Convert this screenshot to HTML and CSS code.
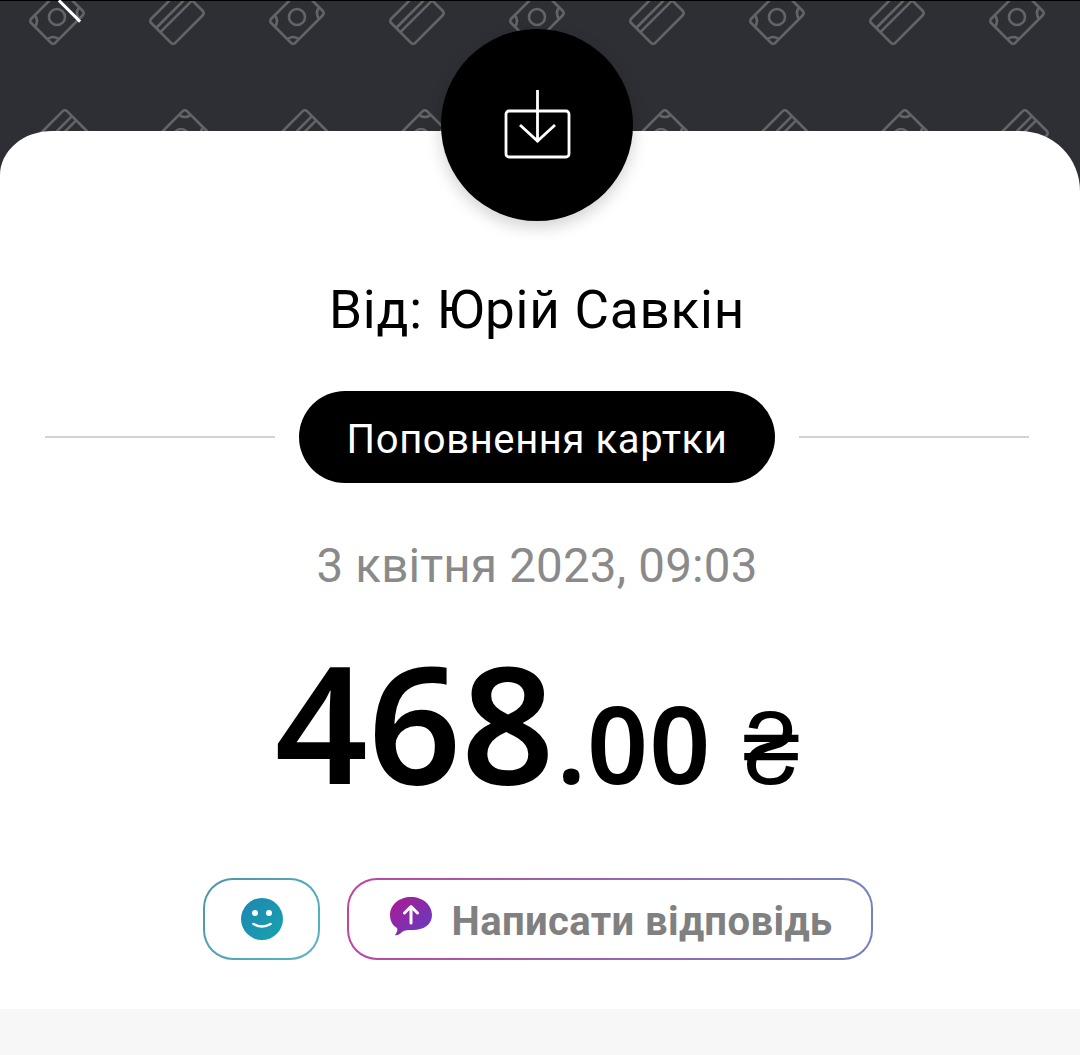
FILE: index.html
```html
<!DOCTYPE html>
<html lang="uk">
<head>
    <meta charset="UTF-8">
    <meta name="viewport" content="width=device-width, initial-scale=1.0">
    <title>Поповнення картки</title>
    <link rel="stylesheet" href="styles.css">
</head>
<body>
    <header class="hero">
        <svg class="hero-pattern" width="1080" height="170" xmlns="http://www.w3.org/2000/svg">
            <defs>
                <g id="money" fill="none" stroke="#636468" stroke-width="2.6" stroke-linejoin="round">
                    <g transform="rotate(-45)">
                        <rect x="-22.500" y="-17" width="45" height="34" rx="3"/>
                        <path d="M-22.500 -9 A8 8 0 0 0 -14.500 -17 M22.500 -9 A8 8 0 0 1 14.500 -17 M-22.500 9 A8 8 0 0 1 -14.500 17 M22.500 9 A8 8 0 0 0 14.500 17"/>
                    </g>
                    <circle cx="0" cy="0" r="8"/>
                </g>
                <g id="card" fill="none" stroke="#636468" stroke-width="2.6" stroke-linejoin="round">
                    <g transform="rotate(-45)">
                        <rect x="-22.500" y="-17" width="45" height="34" rx="3"/>
                        <path d="M-22.500 -7 H22.500 M-22.500 -1 H22.500"/>
                    </g>
                </g>
            </defs>
            <use href="#money" x="57" y="16"/>
            <use href="#card" x="177" y="16"/>
            <use href="#money" x="297" y="16"/>
            <use href="#card" x="417" y="16"/>
            <use href="#money" x="537" y="16"/>
            <use href="#card" x="657" y="16"/>
            <use href="#money" x="777" y="16"/>
            <use href="#card" x="897" y="16"/>
            <use href="#money" x="1017" y="16"/>
            <use href="#card" x="61" y="136"/>
            <use href="#money" x="181" y="136"/>
            <use href="#card" x="301" y="136"/>
            <use href="#money" x="421" y="136"/>
            <use href="#card" x="541" y="136"/>
            <use href="#money" x="661" y="136"/>
            <use href="#card" x="781" y="136"/>
            <use href="#money" x="901" y="136"/>
            <use href="#card" x="1021" y="136"/>
        </svg>
        <span class="hero-tick"></span>
    </header>

    <main class="sheet">
        <div class="badge">
            <svg width="68" height="72" viewBox="0 0 68 72" fill="none" stroke="#fff" stroke-width="2.8" xmlns="http://www.w3.org/2000/svg">
                <rect x="2" y="22" width="63" height="46" rx="3"/>
                <path d="M33.500 1 V53"/>
                <path d="M16 36 L33.500 52 L51 36"/>
            </svg>
        </div>

        <h1 class="sender">Від: Юрій Савкін</h1>

        <div class="type-row">
            <span class="type-line"></span>
            <span class="type-pill">Поповнення картки</span>
            <span class="type-line"></span>
        </div>

        <p class="date">3 квітня 2023, 09:03</p>

        <p class="amount"><span class="amount-int">468</span><span class="amount-frac">.00</span><span class="amount-cur">₴</span></p>

        <div class="actions">
            <button class="btn btn-smile" type="button">
                <svg width="44" height="44" viewBox="0 0 44 44" xmlns="http://www.w3.org/2000/svg">
                    <defs>
                        <linearGradient id="smileFill" x1="0" y1="0" x2="1" y2="1">
                            <stop offset="0" stop-color="#1f86b4"/>
                            <stop offset="1" stop-color="#17a3ad"/>
                        </linearGradient>
                    </defs>
                    <circle cx="22" cy="22" r="21" fill="url(#smileFill)"/>
                    <circle cx="15" cy="16" r="3" fill="#fff"/>
                    <circle cx="29" cy="16" r="3" fill="#fff"/>
                    <path d="M13.500 27 Q22 32 30.500 27" fill="none" stroke="#fff" stroke-width="2.6" stroke-linecap="round"/>
                </svg>
            </button>
            <button class="btn btn-reply" type="button">
                <svg width="44" height="40" viewBox="0 0 44 40" xmlns="http://www.w3.org/2000/svg">
                    <defs>
                        <linearGradient id="replyFill" x1="0" y1="0" x2="1" y2="1">
                            <stop offset="0" stop-color="#ae1a91"/>
                            <stop offset="1" stop-color="#5f3fc4"/>
                        </linearGradient>
                    </defs>
                    <path d="M22 0 C34 0 43 8 43 18 C43 28 34 33 24 33 C19 33 16 33 13 35 C11 37 8 39 6 38 C8 35 9 33 8 31 C3 28 1 23 1 18 C1 8 10 0 22 0 Z" fill="url(#replyFill)"/>
                    <path d="M22 26 V10 M15.500 16 L22 9.500 L28.500 16" fill="none" stroke="#fff" stroke-width="3" stroke-linecap="round" stroke-linejoin="round"/>
                </svg>
                <span class="btn-label">Написати відповідь</span>
            </button>
        </div>
    </main>

    <div class="strip"></div>
</body>
</html>
```

FILE: styles.css
```css
html, body {
    margin: 0;
    padding: 0;
}
body {
    width: 1080px;
    height: 1055px;
    overflow: hidden;
    display: flex;
    flex-direction: column;
    background: #2e2f34;
    font-family: Roboto, "Noto Sans", sans-serif;
}
.hero {
    position: relative;
    height: 131px;
    flex-shrink: 0;
    border-top: 1px solid #000;
    box-sizing: border-box;
}
.hero-pattern {
    display: block;
}
.hero-tick {
    position: absolute;
    left: 68px;
    top: -5px;
    width: 3px;
    height: 30px;
    background: #fff;
    transform: rotate(-45deg);
}
.sheet {
    position: relative;
    height: 878px;
    flex-shrink: 0;
    box-sizing: border-box;
    padding-right: 6px;
    background: #fff;
    border-radius: 52px 60px 0 0 / 44px 60px 0 0;
    display: flex;
    flex-direction: column;
    align-items: center;
}
.badge {
    position: absolute;
    left: 441px;
    top: -102px;
    width: 192px;
    height: 192px;
    border-radius: 50%;
    background: #000;
    box-shadow: 0 6px 16px rgba(0, 0, 0, 0.18);
    display: flex;
    align-items: center;
    justify-content: center;
    padding-left: 1px;
    box-sizing: border-box;
}
.sender {
    margin: 146px 0 0;
    font-size: 53px;
    line-height: 66px;
    font-weight: 400;
    color: #000;
    letter-spacing: 0.8px;
}
.type-row {
    margin-top: 48px;
    width: 984px;
    display: flex;
    align-items: center;
    gap: 24px;
}
.type-line {
    flex: 1;
    height: 2px;
    background: #d2d2d2;
}
.type-pill {
    width: 476px;
    height: 92px;
    box-sizing: border-box;
    padding-top: 4px;
    border-radius: 46px;
    background: #000;
    color: #fff;
    font-size: 40px;
    letter-spacing: 0.6px;
    display: flex;
    align-items: center;
    justify-content: center;
}
.date {
    margin: 53px 0 0;
    font-size: 47.5px;
    line-height: 60px;
    color: #8a8a8a;
    letter-spacing: 0.2px;
}
.amount {
    margin: 25px 0 0;
    font-family: "Noto Sans", Roboto, sans-serif;
    color: #000;
    line-height: 200px;
    height: 200px;
    display: flex;
    align-items: baseline;
}
.amount-int {
    font-size: 163px;
    font-weight: 600;
}
.amount-frac {
    font-size: 107px;
    font-weight: 600;
    margin-left: 2px;
    letter-spacing: 1px;
}
.amount-cur {
    font-family: "Noto Sans CJK JP", sans-serif;
    font-size: 100px;
    font-weight: 500;
    margin-left: 32px;
}
.actions {
    margin-top: 57px;
    padding-left: 2px;
    display: flex;
    gap: 27px;
}
.btn {
    height: 82px;
    box-sizing: border-box;
    border: 2px solid transparent;
    border-radius: 30px;
    display: flex;
    align-items: center;
    justify-content: center;
    padding: 0;
    font-family: Roboto, sans-serif;
}
.btn-smile {
    width: 117px;
    background: linear-gradient(#fff, #fff) padding-box, linear-gradient(135deg, #4f93a8, #57b8c4) border-box;
}
.btn-reply {
    width: 526px;
    gap: 18px;
    padding-left: 2px;
    background: linear-gradient(#fff, #fff) padding-box, linear-gradient(90deg, #bd46a3, #7482c0) border-box;
    font-size: 40px;
    font-weight: 700;
    letter-spacing: 0.4px;
    color: #808080;
}
.btn-reply svg {
    margin-top: -4px;
}
.btn-label {
    padding-top: 4px;
}
.strip {
    flex: 1;
    background: #f7f7f7;
}
```
